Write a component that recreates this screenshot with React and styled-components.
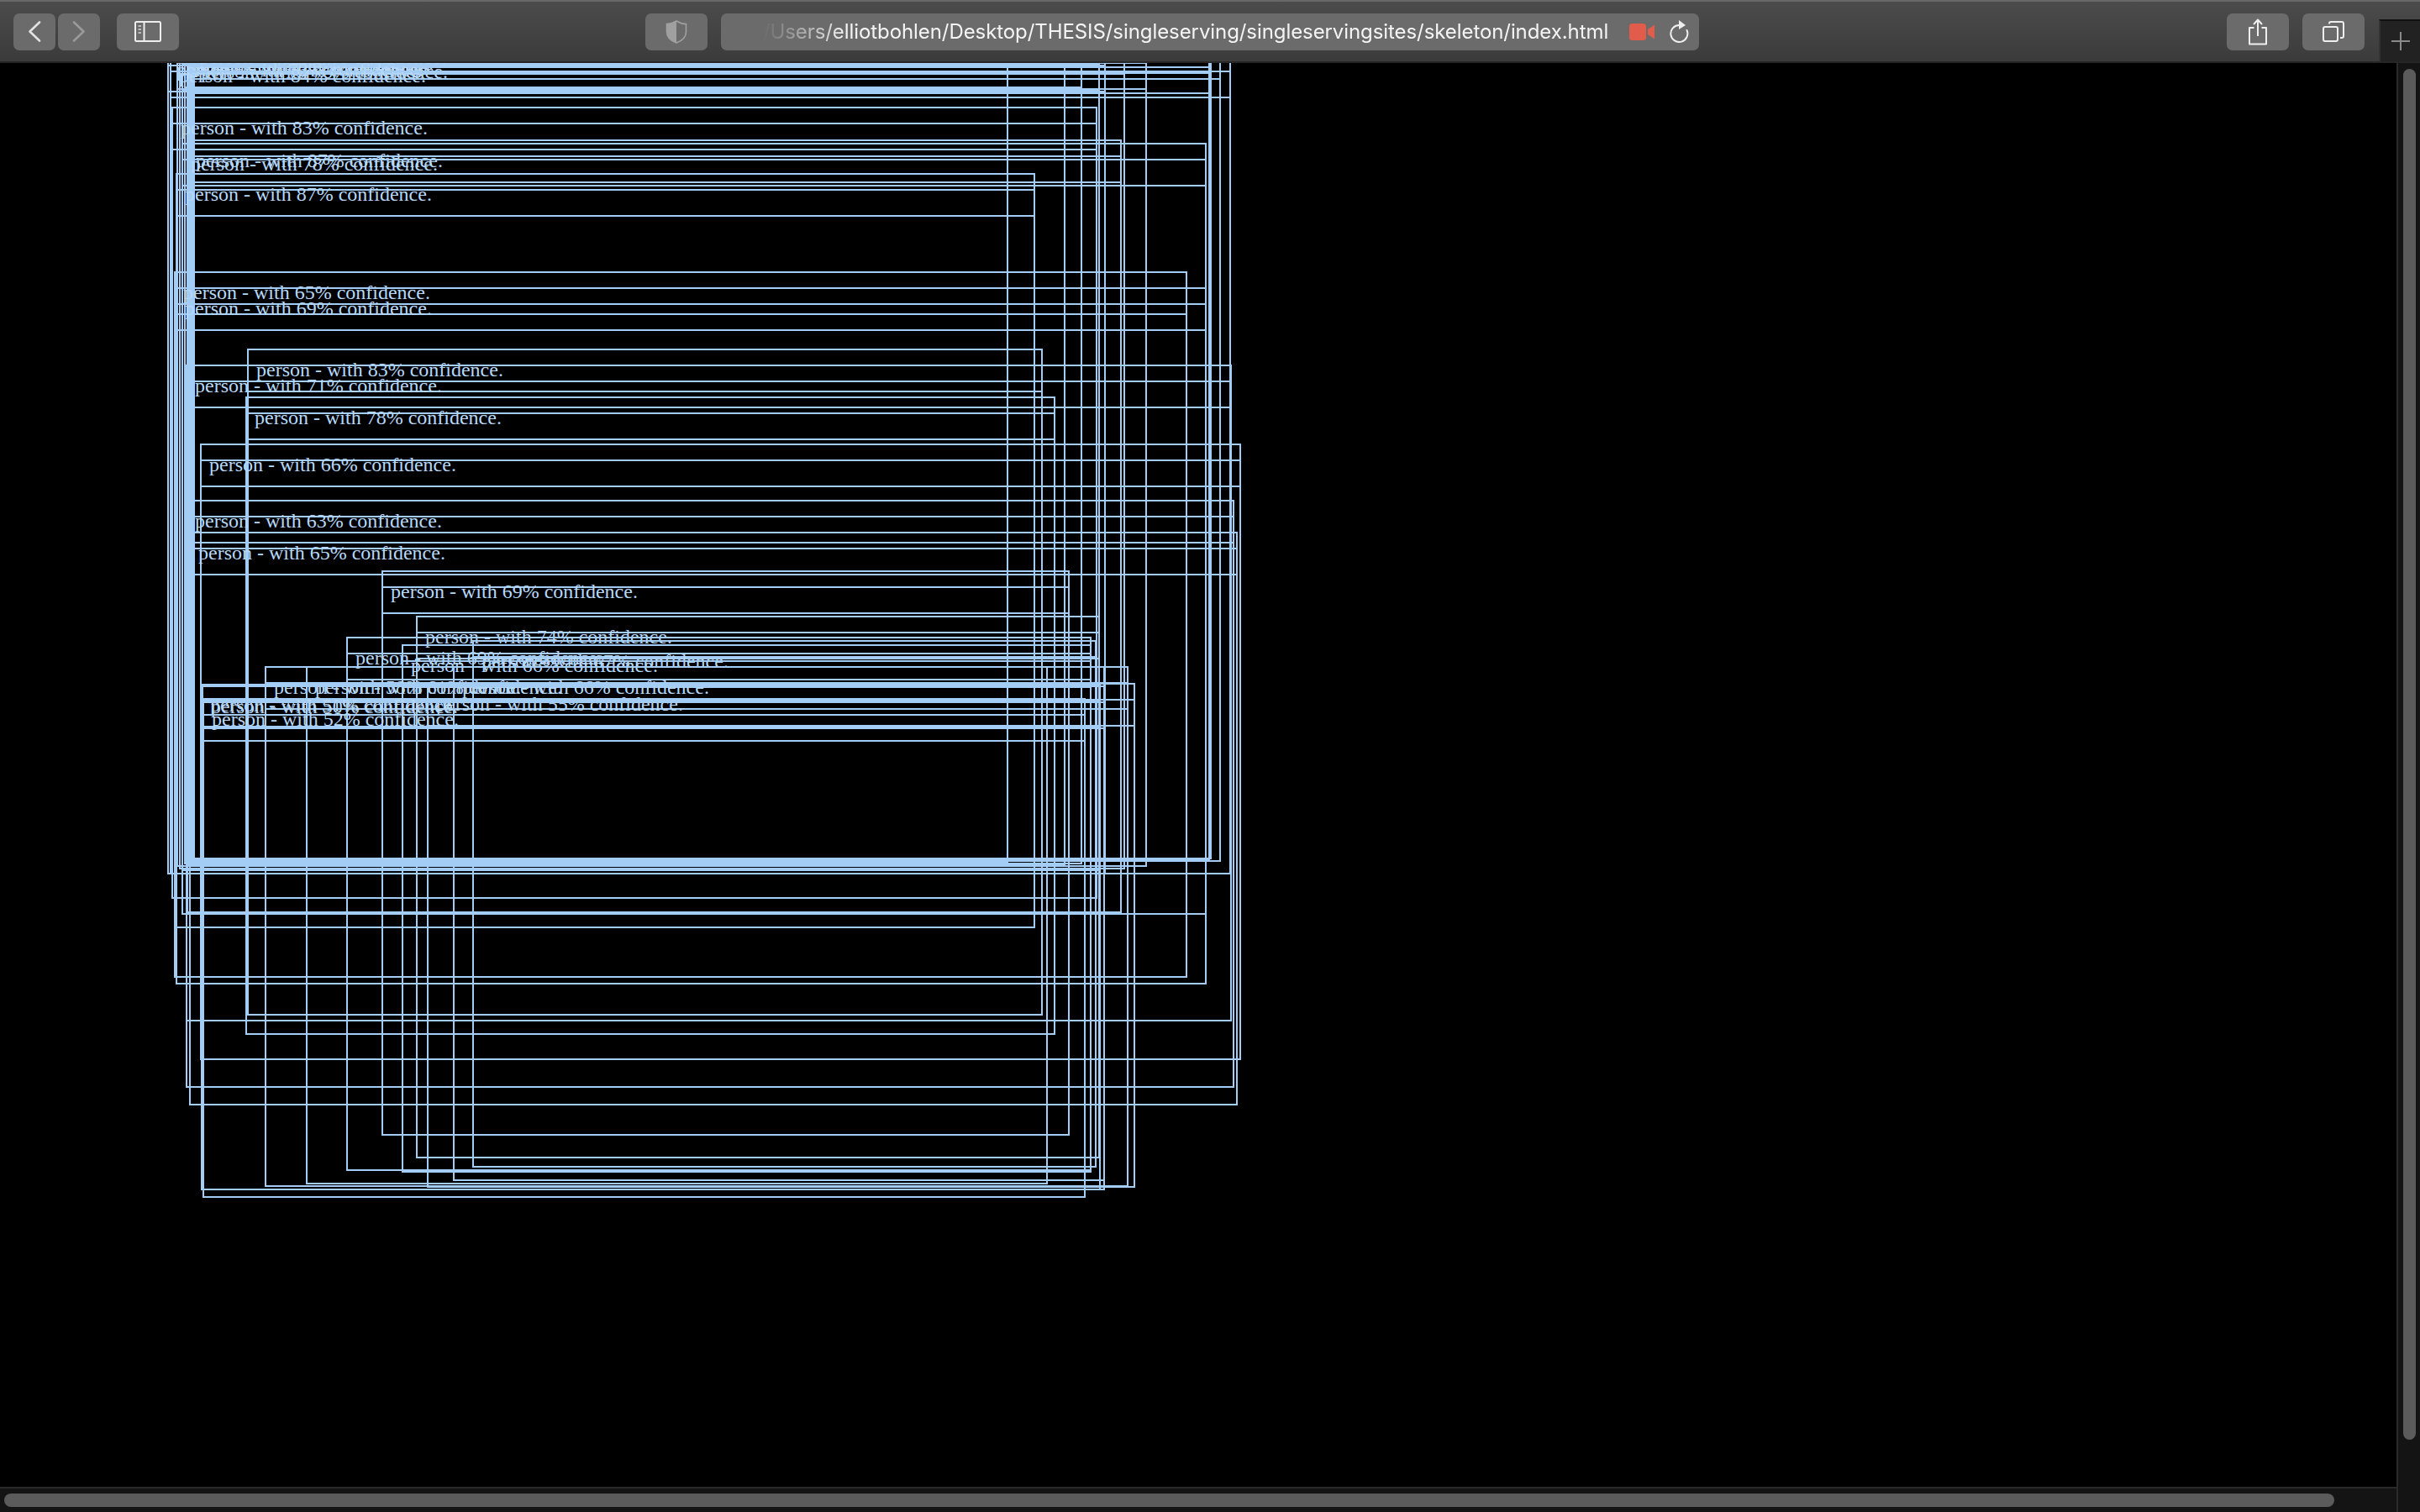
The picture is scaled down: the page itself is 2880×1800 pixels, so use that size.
import React from "react";
import styled, { createGlobalStyle } from "styled-components";

const GlobalStyle = createGlobalStyle`
  html, body { margin: 0; padding: 0; background: #000; overflow: hidden; }
  #root { width: 2880px; height: 1800px; }
`;

// detection boxes as [left, top, right, bottom, confidence], page coordinates
// the first ones start above the fold, their labels sit behind the toolbar
const detections = [
  [224, 28, 1200, 1027, 81],
  [222, 35, 1268, 1031, 74],
  [219, 53, 1288, 1029, 79],
  [216, 56, 1309, 1037, 88],
  [213, 37, 1339, 1035, 70],
  [210, 55, 1365, 1032, 85],
  [228, 60, 1440, 1025, 76],
  [230, 36, 1442, 1023, 91],
  [226, 43, 1453, 1026, 67],
  [199, 58, 1316, 1041, 72],
  [202, 65, 1465, 1041, 84],
  [204, 127, 1306, 1070, 83],
  [222, 166, 1335, 1087, 87],
  [216, 170, 1436, 1089, 78],
  [209, 206, 1232, 1105, 87],
  [207, 323, 1413, 1164, 65],
  [209, 342, 1436, 1172, 69],
  [294, 415, 1241, 1209, 83],
  [221, 434, 1466, 1216, 71],
  [292, 472, 1256, 1232, 78],
  [238, 528, 1477, 1262, 66],
  [221, 595, 1469, 1295, 63],
  [225, 633, 1473, 1316, 65],
  [454, 679, 1273, 1352, 69],
  [495, 733, 1309, 1379, 74],
  [412, 758, 1299, 1394, 69],
  [562, 762, 1305, 1390, 67],
  [478, 767, 1299, 1396, 66],
  [315, 793, 1343, 1413, 58],
  [364, 793, 1247, 1410, 61],
  [539, 793, 1315, 1406, 66],
  [508, 813, 1351, 1414, 55],
  [239, 814, 1310, 1417, 51],
  [240, 816, 1315, 1417, 50],
  [241, 831, 1292, 1426, 52],
];

const TOOLBAR_HEIGHT = 75;

const Window = styled.div`
  width: 2880px;
  height: 1800px;
  display: flex;
  flex-direction: column;
  background: #000;
`;

const Toolbar = styled.header`
  flex: 0 0 ${TOOLBAR_HEIGHT}px;
  box-sizing: border-box;
  display: flex;
  align-items: center;
  padding-left: 16px;
  background: linear-gradient(#4b4b4b, #3b3b3b);
  border-top: 2px solid #686868;
  border-bottom: 2px solid #262626;
  position: relative;
  z-index: 2;
`;

const NavGroup = styled.div`
  display: flex;
  gap: 3px;
`;

const ToolButton = styled.button`
  width: ${(p) => p.$width || 74}px;
  height: 44px;
  margin: 0 0 0 ${(p) => p.$gap || 0}px;
  padding: 0;
  border: none;
  border-radius: 7px;
  background: #6b6b6b;
  display: flex;
  align-items: center;
  justify-content: center;
`;

const UrlBar = styled.div`
  width: 1165px;
  height: 44px;
  margin-left: 16px;
  box-sizing: border-box;
  padding: 0 12px 0 50px;
  border-radius: 7px;
  background: #6b6b6b;
  display: flex;
  align-items: center;
  gap: 17px;
`;

const UrlText = styled.span`
  flex: 1;
  font-family: Inter, "Liberation Sans", sans-serif;
  font-size: 24px;
  letter-spacing: -0.08px;
  color: #f4f4f4;
  white-space: nowrap;
  -webkit-mask-image: linear-gradient(to right, transparent 0, #000 100px);
  mask-image: linear-gradient(to right, transparent 0, #000 100px);
`;

const NewTab = styled.div`
  width: 49px;
  height: 50px;
  margin-left: 17px;
  align-self: flex-end;
  box-sizing: border-box;
  background: #222;
  border-top: 2px solid #111;
  border-left: 2px solid #333;
  display: flex;
  align-items: center;
  justify-content: center;
`;

const Body = styled.div`
  flex: 1;
  display: flex;
  min-height: 0;
`;

const Content = styled.div`
  flex: 1;
  display: flex;
  flex-direction: column;
  min-width: 0;
`;

const Viewport = styled.main`
  flex: 1;
  position: relative;
  overflow: hidden;
  background: #000;
`;

const Box = styled.div`
  position: absolute;
  left: ${(p) => p.$x}px;
  top: ${(p) => p.$y - TOOLBAR_HEIGHT}px;
  width: ${(p) => p.$w}px;
  height: ${(p) => p.$h}px;
  box-sizing: border-box;
  border: 2px solid #a3cdf5;
`;

const Label = styled.p`
  margin: 17px 0 0;
  height: 33px;
  box-sizing: border-box;
  padding-left: 9px;
  border-top: 2px solid #a3cdf5;
  border-bottom: 2px solid #a3cdf5;
  font-family: "Liberation Serif", "Times New Roman", serif;
  font-size: 24px;
  line-height: 8px;
  color: #b6d8f9;
  white-space: nowrap;
`;

const HScroll = styled.div`
  flex: 0 0 30px;
  box-sizing: border-box;
  padding: 6px 74px 6px 5px;
  background: #141414;
  border-top: 2px solid #2a2a2a;
`;

const VScroll = styled.div`
  flex: 0 0 28px;
  box-sizing: border-box;
  padding: 7px 5px 86px 6px;
  background: #141414;
  border-left: 2px solid #2a2a2a;
`;

const Thumb = styled.div`
  width: 100%;
  height: 100%;
  background: #5b5b5b;
  border-radius: 9px;
`;

const ChevronIcon = ({ flip, color }) => (
  <svg width="16" height="25" viewBox="0 0 16 25" fill="none">
    <path
      d={flip ? "M2 1.5 L13.5 12.5 L2 23.5" : "M14 1.5 L2.5 12.5 L14 23.5"}
      stroke={color}
      strokeWidth="2.6"
      strokeLinecap="round"
      strokeLinejoin="round"
    />
  </svg>
);

const SidebarIcon = () => (
  <svg width="32" height="25" viewBox="0 0 32 25" fill="none">
    <rect x="1" y="1" width="30" height="23" rx="1.5" stroke="#eee" strokeWidth="2" />
    <path d="M11.5 1 V24" stroke="#eee" strokeWidth="2" />
    <path d="M4.5 6 H8 M4.5 10 H8 M4.5 14 H8" stroke="#bbb" strokeWidth="2" />
  </svg>
);

const ShieldIcon = () => (
  <svg width="26" height="28" viewBox="0 0 26 28" fill="none">
    <path d="M13 1 C9 3.5 5 4.5 1.5 4.5 V14 C1.5 20 6 24.5 13 27 Z" fill="#a0a0a0" />
    <path
      d="M13 1 C17 3.5 21 4.5 24.5 4.5 V14 C24.5 20 20 24.5 13 27 C6 24.5 1.5 20 1.5 14 V4.5 C5 4.5 9 3.5 13 1 Z"
      stroke="#a0a0a0"
      strokeWidth="1.6"
    />
  </svg>
);

const CameraIcon = () => (
  <svg width="30" height="20" viewBox="0 0 30 20">
    <rect x="0" y="0" width="20" height="20" rx="3.5" fill="#e25c4c" />
    <path d="M22 7 L30 1.5 V18.5 L22 13 Z" fill="#e25c4c" />
  </svg>
);

const ReloadIcon = () => (
  <svg width="24" height="27" viewBox="0 0 24 27" fill="none">
    <path
      d="M12 6 A10 10 0 1 0 21.5 12"
      stroke="#eee"
      strokeWidth="2"
      strokeLinecap="round"
    />
    <path d="M12 0 L20 6 L12 11 Z" fill="#eee" />
  </svg>
);

const ShareIcon = () => (
  <svg width="24" height="32" viewBox="0 0 24 32" fill="none">
    <path
      d="M7.5 11 H2 V30.5 H22 V11 H16.5"
      stroke="#eee"
      strokeWidth="2"
      strokeLinejoin="round"
    />
    <path d="M12 2 V21" stroke="#eee" strokeWidth="2" />
    <path d="M7 7 L12 1.5 L17 7" stroke="#eee" strokeWidth="2" strokeLinejoin="round" />
  </svg>
);

const TabsIcon = () => (
  <svg width="26" height="25" viewBox="0 0 26 25" fill="none">
    <rect x="1" y="7" width="17" height="17" rx="2" stroke="#eee" strokeWidth="2" />
    <path d="M8 3.5 V3 A2 2 0 0 1 10 1 H23 A2 2 0 0 1 25 3 V18 A2 2 0 0 1 23 20 H21" stroke="#eee" strokeWidth="2" />
  </svg>
);

const PlusIcon = () => (
  <svg width="24" height="24" viewBox="0 0 24 24" fill="none">
    <path d="M12 1 V23 M1 12 H23" stroke="#8a8a8a" strokeWidth="2" />
  </svg>
);

export default function App() {
  return (
    <Window>
      <GlobalStyle />
      <Toolbar>
        <NavGroup>
          <ToolButton $width={50}>
            <ChevronIcon color="#e2e2e2" />
          </ToolButton>
          <ToolButton $width={50}>
            <ChevronIcon flip color="#9a9a9a" />
          </ToolButton>
        </NavGroup>
        <ToolButton $gap={20}>
          <SidebarIcon />
        </ToolButton>
        <ToolButton $gap={555}>
          <ShieldIcon />
        </ToolButton>
        <UrlBar>
          <UrlText>/Users/elliotbohlen/Desktop/THESIS/singleserving/singleservingsites/skeleton/index.html</UrlText>
          <CameraIcon />
          <ReloadIcon />
        </UrlBar>
        <ToolButton $gap={628}>
          <ShareIcon />
        </ToolButton>
        <ToolButton $gap={16}>
          <TabsIcon />
        </ToolButton>
        <NewTab>
          <PlusIcon />
        </NewTab>
      </Toolbar>
      <Body>
        <Content>
          <Viewport>
            {detections.map(([left, top, right, bottom, confidence], i) => (
              <Box key={i} $x={left} $y={top} $w={right - left} $h={bottom - top}>
                <Label>person - with {confidence}% confidence.</Label>
              </Box>
            ))}
          </Viewport>
          <HScroll>
            <Thumb />
          </HScroll>
        </Content>
        <VScroll>
          <Thumb />
        </VScroll>
      </Body>
    </Window>
  );
}
